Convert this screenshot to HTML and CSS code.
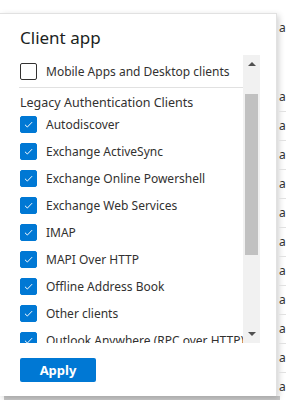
FILE: index.html
```html
<!DOCTYPE html>
<html>
<head>
  <meta name="viewport" content="width=device-width, initial-scale=1.0">
  <title>Client app</title>
  <link rel="stylesheet" href="styles.css">
</head>
<body>
  <div class="page">
    <div class="panel">
      <h2>Client app</h2>
      <div class="list">
        <div class="items">
          <label class="item first"><span class="box"></span>Mobile Apps and Desktop clients</label>
          <div class="group">Legacy Authentication Clients</div>
          <label class="item"><span class="box on"><svg viewBox="0 0 17 17"><path d="M4.5 8.8 L7.2 11.4 L12.6 5.8"/></svg></span>Autodiscover</label>
          <label class="item"><span class="box on"><svg viewBox="0 0 17 17"><path d="M4.5 8.8 L7.2 11.4 L12.6 5.8"/></svg></span>Exchange ActiveSync</label>
          <label class="item"><span class="box on"><svg viewBox="0 0 17 17"><path d="M4.5 8.8 L7.2 11.4 L12.6 5.8"/></svg></span>Exchange Online Powershell</label>
          <label class="item"><span class="box on"><svg viewBox="0 0 17 17"><path d="M4.5 8.8 L7.2 11.4 L12.6 5.8"/></svg></span>Exchange Web Services</label>
          <label class="item"><span class="box on"><svg viewBox="0 0 17 17"><path d="M4.5 8.8 L7.2 11.4 L12.6 5.8"/></svg></span>IMAP</label>
          <label class="item"><span class="box on"><svg viewBox="0 0 17 17"><path d="M4.5 8.8 L7.2 11.4 L12.6 5.8"/></svg></span>MAPI Over HTTP</label>
          <label class="item"><span class="box on"><svg viewBox="0 0 17 17"><path d="M4.5 8.8 L7.2 11.4 L12.6 5.8"/></svg></span>Offline Address Book</label>
          <label class="item"><span class="box on"><svg viewBox="0 0 17 17"><path d="M4.5 8.8 L7.2 11.4 L12.6 5.8"/></svg></span>Other clients</label>
          <label class="item"><span class="box on"><svg viewBox="0 0 17 17"><path d="M4.5 8.8 L7.2 11.4 L12.6 5.8"/></svg></span>Outlook Anywhere (RPC over HTTP)</label>
        </div>
        <div class="scrollbar">
          <span class="arrow up"></span>
          <span class="thumb"></span>
          <span class="arrow down"></span>
        </div>
      </div>
      <button class="apply">Apply</button>
    </div>
    <div class="backdrop">
      <div class="row head">a</div>
      <div class="row">a</div>
      <div class="row">a</div>
      <div class="row">a</div>
      <div class="row">a</div>
      <div class="row">a</div>
      <div class="row">a</div>
      <div class="row">a</div>
      <div class="row">a</div>
      <div class="row">a</div>
      <div class="row">a</div>
      <div class="row">a</div>
    </div>
  </div>
  <div class="hscroll"></div>
</body>
</html>
```

FILE: styles.css
```css
body {
  margin: 0;
  padding: 0;
  background: #ffffff;
  font-family: "Noto Sans", "Open Sans", sans-serif;
  font-size: 12px;
  color: #323130;
  overflow: hidden;
}

.page {
  display: grid;
  grid-template-columns: 277px 1fr;
  padding-top: 13px;
  height: 383px;
}

.panel {
  display: flex;
  flex-direction: column;
  background: #ffffff;
  border-top: 1px solid #e1e1e1;
  border-right: 1px solid #e1e1e1;
  box-shadow: 2px 2px 6px rgba(0, 0, 0, 0.18);
  box-sizing: border-box;
}

h2 {
  margin: 0;
  padding: 12px 0 0 20px;
  height: 41px;
  box-sizing: border-box;
  font-size: 17px;
  font-weight: 400;
  line-height: 24px;
  color: #201f1e;
}

.list {
  display: flex;
  margin-left: 18px;
  width: 242px;
  height: 288px;
}

.items {
  flex: 1;
  overflow: hidden;
}

.item {
  display: flex;
  align-items: center;
  gap: 9px;
  height: 27px;
  padding-left: 2px;
  white-space: nowrap;
}

.item.first {
  height: 33px;
  border-bottom: 1px solid #e1e1e1;
  box-sizing: border-box;
  margin-left: 1px;
  padding-left: 1px;
}

.group {
  height: 23px;
  padding: 6px 0 0 2px;
  box-sizing: border-box;
  font-size: 12.5px;
  line-height: 17px;
}

.box {
  flex: none;
  width: 17px;
  height: 17px;
  border: 1px solid #323130;
  border-radius: 2px;
  box-sizing: border-box;
}

.box.on {
  background: #0078d4;
  border-color: #0078d4;
}

.box svg {
  display: block;
  width: 15px;
  height: 15px;
  fill: none;
  stroke: #ffffff;
  stroke-width: 1.1;
}

.scrollbar {
  flex: none;
  width: 17px;
  background: #f1f1f1;
  display: flex;
  flex-direction: column;
  align-items: center;
}

.arrow {
  width: 0;
  height: 0;
  border-left: 4px solid transparent;
  border-right: 4px solid transparent;
}

.arrow.up {
  margin-top: 7px;
  border-bottom: 4px solid #505050;
}

.arrow.down {
  margin-top: auto;
  margin-bottom: 7px;
  border-top: 4px solid #505050;
}

.thumb {
  margin-top: 28px;
  width: 13px;
  height: 161px;
  background: #c1c1c1;
}

.apply {
  margin: 15px 0 0 20px;
  width: 76px;
  height: 24px;
  padding: 0;
  background: #0078d4;
  color: #ffffff;
  border: none;
  border-radius: 2px;
  font-family: "Noto Sans", "Open Sans", sans-serif;
  font-size: 13px;
  font-weight: 700;
}

.backdrop {
  display: flex;
  flex-direction: column;
  padding-left: 2px;
  overflow: hidden;
}

.row {
  flex: none;
  height: 28px;
  line-height: 28px;
  border-bottom: 1px solid #e1e1e1;
  font-size: 12px;
}

.row.head {
  height: 70px;
  line-height: 30px;
  border-bottom: none;
}

.hscroll {
  margin-left: 4px;
  width: 276px;
  height: 4px;
  background: #c8c8c8;
}
```
